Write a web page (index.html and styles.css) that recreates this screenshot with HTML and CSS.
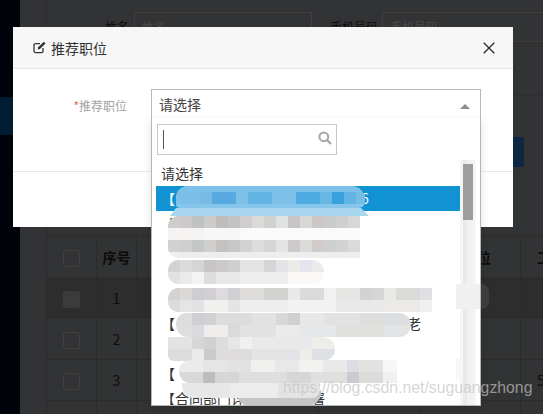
FILE: index.html
```html
<!DOCTYPE html>
<html lang="zh-CN">
<head>
<meta charset="utf-8">
<title>推荐职位</title>
<link rel="stylesheet" href="styles.css">
</head>
<body>
<div class="page">
  <aside class="sidebar"><div class="side-active"></div></aside>
  <main class="main">
    <div class="panel">
      <div class="filter">
        <span class="f-label">姓名</span><span class="f-input">姓名</span>
        <span class="f-label f-label-2">手机号码</span><span class="f-input f-input-2">手机号码</span>
      </div>
      <div class="filter filter-b"></div>
      <div class="actions"><span class="action-btn"></span></div>
      <table class="grid">
        <colgroup><col class="c1"><col class="c2"><col class="c3"><col class="c4"><col class="c5"><col class="c6"><col class="c7"></colgroup>
        <tr class="head"><td><i class="check"></i></td><td>序号</td><td></td><td></td><td></td><td class="end">位</td><td class="start">工</td></tr>
        <tr class="hover"><td><i class="check check-on"></i></td><td>1</td><td></td><td></td><td></td><td></td><td></td></tr>
        <tr><td><i class="check"></i></td><td>2</td><td></td><td></td><td></td><td></td><td></td></tr>
        <tr><td><i class="check"></i></td><td>3</td><td></td><td></td><td></td><td></td><td class="start">5</td></tr>
        <tr><td><i class="check"></i></td><td></td><td></td><td></td><td></td><td></td><td></td></tr>
      </table>
    </div>
  </main>
</div>

<section class="modal">
  <header class="modal-head">
    <svg class="edit-icon" viewBox="0 0 14 14" width="14" height="14"><path d="M10 8v3a1.6 1.6 0 0 1-1.6 1.6H2.6A1.6 1.6 0 0 1 1 11V5.2a1.6 1.6 0 0 1 1.6-1.6H7" fill="none" stroke="#333" stroke-width="1.3"/><path d="M5.2 7.3 10.8 1.7l1.7 1.7-5.6 5.6-2.2.5z" fill="#333"/></svg>
    <h2 class="modal-title">推荐职位</h2>
    <svg class="close-icon" viewBox="0 0 12 12" width="12" height="12"><path d="M.7.7l10.6 10.6M11.3.7.7 11.3" stroke="#2b2b33" stroke-width="1.3" fill="none"/></svg>
  </header>
  <div class="modal-body">
    <label class="field-label"><span class="req">*</span>推荐职位</label>
    <div class="select">
      <span class="select-value">请选择</span>
      <i class="caret"></i>
      <div class="drop">
        <div class="search">
          <i class="cursor"></i>
          <svg class="search-icon" viewBox="0 0 14 14" width="14" height="14"><circle cx="5.8" cy="5.8" r="4.4" fill="none" stroke="#a9a5a1" stroke-width="2"/><path d="M9 9l4 4" stroke="#a9a5a1" stroke-width="2.2"/></svg>
        </div>
        <ul class="options">
          <li>请选择</li>
          <li class="sel">【<span class="tail t6">6</span></li>
          <li>【</li>
          <li></li>
          <li></li>
          <li></li>
          <li>【<span class="tail tlao">老</span></li>
          <li><span class="tail t2">2</span></li>
          <li>【</li>
          <li>【合同部门详<span class="tail thao">署</span></li>
        </ul>
        <div class="scroll"><div class="thumb"></div></div>
        <div class="band"></div>
        <div class="mos a"><div class="r ra0"></div><div class="r ra1"></div></div>
        <div class="mos b"><div class="r rb1"></div><div class="r rb2"></div><div class="r rb1 dim"></div><div class="r rb4"></div></div>
        <div class="mos c"><div class="r rc1"></div><div class="r rc2"></div></div>
        <div class="mos d"><div class="r rd1"></div><div class="r rd2"></div></div>
        <div class="mos e"><div class="r re1"></div><div class="r re2"></div></div>
        <div class="mos f"><div class="r rf1"></div><div class="r rf2"></div></div>
        <div class="mos g"><div class="r rg1"></div><div class="r rg2"></div></div>
        <div class="mos-dark"></div>
        <div class="mos h"></div>
        <div class="ghost"></div>
        <div class="ghost-2"></div>
      </div>
    </div>
  </div>
</section>
<div class="ghost-out"></div>
<div class="watermark">https://blog.csdn.net/suguangzhong</div>
</body>
</html>
```
FILE: styles.css
```css
* { box-sizing: border-box; }
html, body { margin: 0; padding: 0; }
body {
  width: 543px; height: 414px; overflow: hidden; position: relative;
  background: #323334; color: #333;
  font-family: "Noto Sans CJK SC", "Liberation Sans", sans-serif;
}
.page { display: flex; height: 414px; }
.sidebar { width: 20px; background: #00030a; padding-top: 97px; flex: none; }
.side-active { height: 38px; background: #021c33; }
.main { flex: 1; min-width: 0; padding-left: 26px; overflow: hidden; }
.panel { border-left: 1px solid #2b2b2c; width: 700px; height: 414px; }
.filter { height: 43px; padding: 12px 0 0 58px; display: flex; align-items: flex-start; border-bottom: 1px solid #2d2e2f; font-size: 12px; color: #0c0c0c; }
.filter-b { height: 53px; padding: 0; }
.f-label { line-height: 30px; width: 29px; white-space: nowrap; }
.f-input { width: 178px; height: 30px; border: 1px solid #3e3e3e; padding-left: 7px; line-height: 28px; color: #4a4a4a; }
.f-label-2 { width: 52px; margin-left: 18px; }
.f-input-2 { width: 240px; }
.actions { height: 140px; padding: 41px 0 0 417px; }
.action-btn { display: block; width: 60px; height: 30px; background: #0e2741; border-radius: 3px; }
.grid { border-collapse: collapse; table-layout: fixed; width: 650px; margin-left: -1px; font-size: 14px; color: #0c0c0c; }
.c1 { width: 50px; } .c2 { width: 40px; } .c3 { width: 101px; } .c4 { width: 81px; } .c5 { width: 102px; } .c6 { width: 100px; } .c7 { width: 176px; }
.grid td { height: 41px; padding: 0; border: 1px solid #2c2c2d; text-align: center; }
.head td { font-weight: 700; }
.grid .hover td { background: #2d2d2d; }
.grid .end { text-align: right; padding-right: 29px; }
.grid .start { text-align: left; padding-left: 16px; }
.check { display: inline-block; width: 17px; height: 17px; border: 1px solid #3f3f3f; border-radius: 2px; vertical-align: middle; }
.check-on { background: #3b3b3b; border-color: #3b3b3b; }

.modal { position: absolute; left: 13px; top: 27px; width: 500px; height: 200px; background: #fff; }
.modal-head { height: 42px; background: #f7f7f7; border-bottom: 1px solid #e5e5e5; display: flex; align-items: center; padding: 0 18px 0 20px; }
.edit-icon { margin-top: -2px; flex: none; }
.modal-title { margin: 0 0 0 4px; font-size: 14px; font-weight: 400; color: #333; line-height: 40px; flex: 1; }
.close-icon { flex: none; margin-top: 1px; }
.modal-body { display: flex; align-items: flex-start; padding-top: 20px; height: 103px; border-bottom: 1px solid #e8e8e8; }
.field-label { width: 114px; margin-right: 24px; text-align: right; font-size: 12px; line-height: 34px; color: #a3a3a3; }
.req { color: #e06a5e; }
.select { position: relative; width: 330px; height: 30px; border: 1px solid #b8b8b8; font-size: 14px; color: #444; padding-left: 7px; line-height: 29px; }
.caret { position: absolute; right: 10px; top: 14px; border: 5px solid transparent; border-top: 0; border-bottom: 5px solid #8d8d8d; }
.drop { position: absolute; left: -1px; top: 28px; width: 330px; height: 288px; background: #fff; border: 1px solid #b6b6b6; border-top: 0; box-shadow: 0 3px 8px rgba(0,0,0,.12); overflow: hidden; }
.search { position: relative; margin: 6px 0 0 5px; width: 180px; height: 31px; border: 1px solid #c8c8c8; }
.cursor { position: absolute; left: 5px; top: 5px; width: 1px; height: 19px; background: #555; }
.search-icon { position: absolute; right: 4px; top: 6px; }
.options { list-style: none; margin: 6px 0 0; padding: 0 0 0 4px; width: 308px; height: 244px; overflow: hidden; }
.options li { height: 25px; line-height: 25px; padding-left: 5px; white-space: nowrap; font-size: 14px; color: #333; }
.options li.sel { background: #1092d3; color: #fff; }
.t6 { margin-left: 186px; }
.tlao { margin-left: 232px; }
.t2 { margin-left: 166px; }
.thao { margin-left: 66px; }
.scroll { position: absolute; left: 308px; top: 42px; width: 16px; height: 246px; padding: 4px 3px 0; background: linear-gradient(90deg, #f5f5f5 3px, #e9e9e9 0 7px, #f1f1f1 0 13px, #f5f5f5 0); }
.thumb { height: 56px; width: 10px; background: #9d9d9d; }

.mos { position: absolute; overflow: hidden; }
.r { height: 12px; }
.band { position: absolute; left: 18px; top: 90px; width: 199px; height: 8px; background: #a9d7f0; clip-path: polygon(3% 0, 96% 0, 100% 100%, 0 100%); }
.a { left: 24px; top: 68px; width: 189px; height: 22px; border-radius: 12px 14px 6px 4px; background: #85c6ea; }
.ra0 { height: 6px; background: #7cc1e9; }
.ra1 { background: linear-gradient(90deg, #7cbfe8 24px, #77bae6 0 36px, #58a9e2 0 60px, #7cc1e8 0 72px, #63b5e3 0 96px, #7dc1e8 0 120px, #4eabe1 0 144px, #66b7e4 0 156px, #36a1dc 0 168px, #63b6e4 0 180px, #76bde6 0); }
.b { left: 16px; top: 98px; width: 192px; height: 42px; border-radius: 10px 0 0 10px; }
.rb1 { background: linear-gradient(90deg, #cfcdcb 12px, #cbc9c9 0 24px, #bfc2c2 0 36px, #cdcbca 0 48px, #bfbcba 0 60px, #c3c2c4 0 72px, #cfcdcd 0 84px, #dcdad8 0 96px, #d0d2d0 0 108px, #e0e1e2 0 120px, #c9c5c6 0 132px, #d7d8d6 0 144px, #ccc7c4 0 156px, #c8cccb 0 168px, #cecfce 0 180px, #d7d7d9 0); }
.rb2 { background: linear-gradient(90deg, #f4f3f2 36px, #f7f7f7 0 72px, #fafafa 0); }
.dim { opacity: .92; }
.rb4 { height: 6px; background: #eeeeee; }
.c { left: 16px; top: 142px; width: 156px; height: 24px; border-radius: 10px 12px 12px 10px; }
.rc1 { background: linear-gradient(90deg, #d3d3d3 12px, #dcdad9 0 24px, #d5d5d8 0 36px, #c8c6c4 0 48px, #cbc9c9 0 60px, #d0cfd0 0 72px, #e3e3e3 0 96px, #d5d5d5 0 108px, #e3e4e7 0 120px, #ebebe7 0 132px, #e3e4ed 0 144px, #ebebeb 0); }
.rc2 { background: linear-gradient(90deg, #e2e2e2 12px, #ebeaea 0 24px, #f2f3f2 0 36px, #dddddd 0 48px, #e8e8e8 0 72px, #eeeeee 0 120px, #faf9f8 0); }
.d { left: 16px; top: 170px; width: 264px; height: 24px; border-radius: 10px 0 0 10px; }
.rd1 { background: linear-gradient(90deg, #d4d3d2 12px, #dad9d8 0 24px, #cdcdd2 0 36px, #d2ced1 0 48px, #dcdcdf 0 60px, #d0d0d4 0 72px, #dddcdb 0 96px, #d2d2d1 0 120px, #e9e9e9 0 132px, #dadada 0 156px, #f0f1f0 0 168px, #e6e6e4 0 192px, #d3d3d5 0 204px, #d6d6d4 0 216px, #e9e9e8 0 228px, #dadad8 0 252px, #dfe0e4 0); }
.rd2 { background: linear-gradient(90deg, #dcdcdc 12px, #e5e5e5 0 24px, #e2e2e5 0 36px, #f0f0ef 0 60px, #e4e4e4 0 72px, #eeeeee 0 120px, #f2f2f2 0 168px, #e9e9e9 0 216px, #ebeae9 0 252px, #f0f0f2 0); }
.e { left: 24px; top: 195px; width: 235px; height: 24px; border-radius: 10px 12px 12px 12px; }
.re1 { background: linear-gradient(90deg, #dddddb 16px, #cecfd3 0 28px, #d3d0d3 0 40px, #dcdcdc 0 76px, #e2e2e0 0 100px, #d8d8d8 0 112px, #d0d0d0 0 124px, #e8e8e8 0 148px, #e0e2e4 0 184px, #dddddb 0 208px, #dcdfe1 0); }
.re2 { background: linear-gradient(90deg, #dedede 16px, #dadade 0 28px, #efeeec 0 52px, #dadadc 0 64px, #e2e2e2 0 100px, #ebebeb 0 124px, #e6e7e8 0 160px, #e0e0de 0 208px, #e2e3e4 0); }
.f { left: 16px; top: 219px; width: 167px; height: 24px; border-radius: 0 12px 12px 6px; }
.rf1 { background: linear-gradient(90deg, #e3e3e3 24px, #d6d6d9 0 36px, #d2d1cf 0 48px, #dcdcdc 0 60px, #e6e6e6 0 72px, #eff0ef 0 84px, #e8e9e9 0 132px, #e8e8ee 0 144px, #ededea 0); }
.rf2 { background: linear-gradient(90deg, #dcdcdc 24px, #ebebeb 0 36px, #cbcbcb 0 48px, #dedcdc 0 84px, #e4e4e4 0 120px, #e2e3e6 0 132px, #eeede9 0 144px, #dfe0e4 0); }
.g { left: 27px; top: 242px; width: 218px; height: 23px; border-radius: 12px 4px 0 12px; }
.rg1 { background: linear-gradient(90deg, #ecebea 24px, #e5e5e5 0 48px, #e2e2e2 0 72px, #f0f0ef 0 96px, #e8e8e8 0 120px, #f2f2f1 0 144px, #e9e9e9 0 168px, #dcdde2 0 180px, #e4e2e1 0 204px, #f6f7f9 0); }
.rg2 { background: linear-gradient(90deg, #d9d8d8 24px, #bebcbc 0 36px, #d6d6d6 0 60px, #dedede 0 108px, #d5d6d6 0 132px, #e0dfdd 0 168px, #c9cbce 0 180px, #dedcdb 0 204px, #f0f1f3 0); }
.h { left: 30px; top: 265px; width: 138px; height: 15px; border-radius: 0 0 8px 12px; background: linear-gradient(90deg, #e7e7e7 48px, #ececec 0 96px, #e3e3e3 0); }
.mos-dark { position: absolute; left: 84px; top: 272px; width: 85px; height: 16px; background: #c5c5c5; border-radius: 0 0 14px 14px; }
.ghost { position: absolute; left: 304px; top: 166px; width: 24px; height: 25px; background: #f0f0f0; }
.ghost-2 { position: absolute; left: 304px; top: 240px; width: 6px; height: 22px; background: #f7f7f7; border-radius: 0 8px 8px 0; }
.ghost-out { position: absolute; left: 481px; top: 284px; width: 8px; height: 25px; background: #3d3d3e; border-radius: 0 12px 12px 0; }
.watermark { position: absolute; left: 283px; top: 379px; font-family: "Liberation Sans", sans-serif; font-size: 15.8px; line-height: 18px; color: rgba(195,195,195,.7); white-space: nowrap; }
```
